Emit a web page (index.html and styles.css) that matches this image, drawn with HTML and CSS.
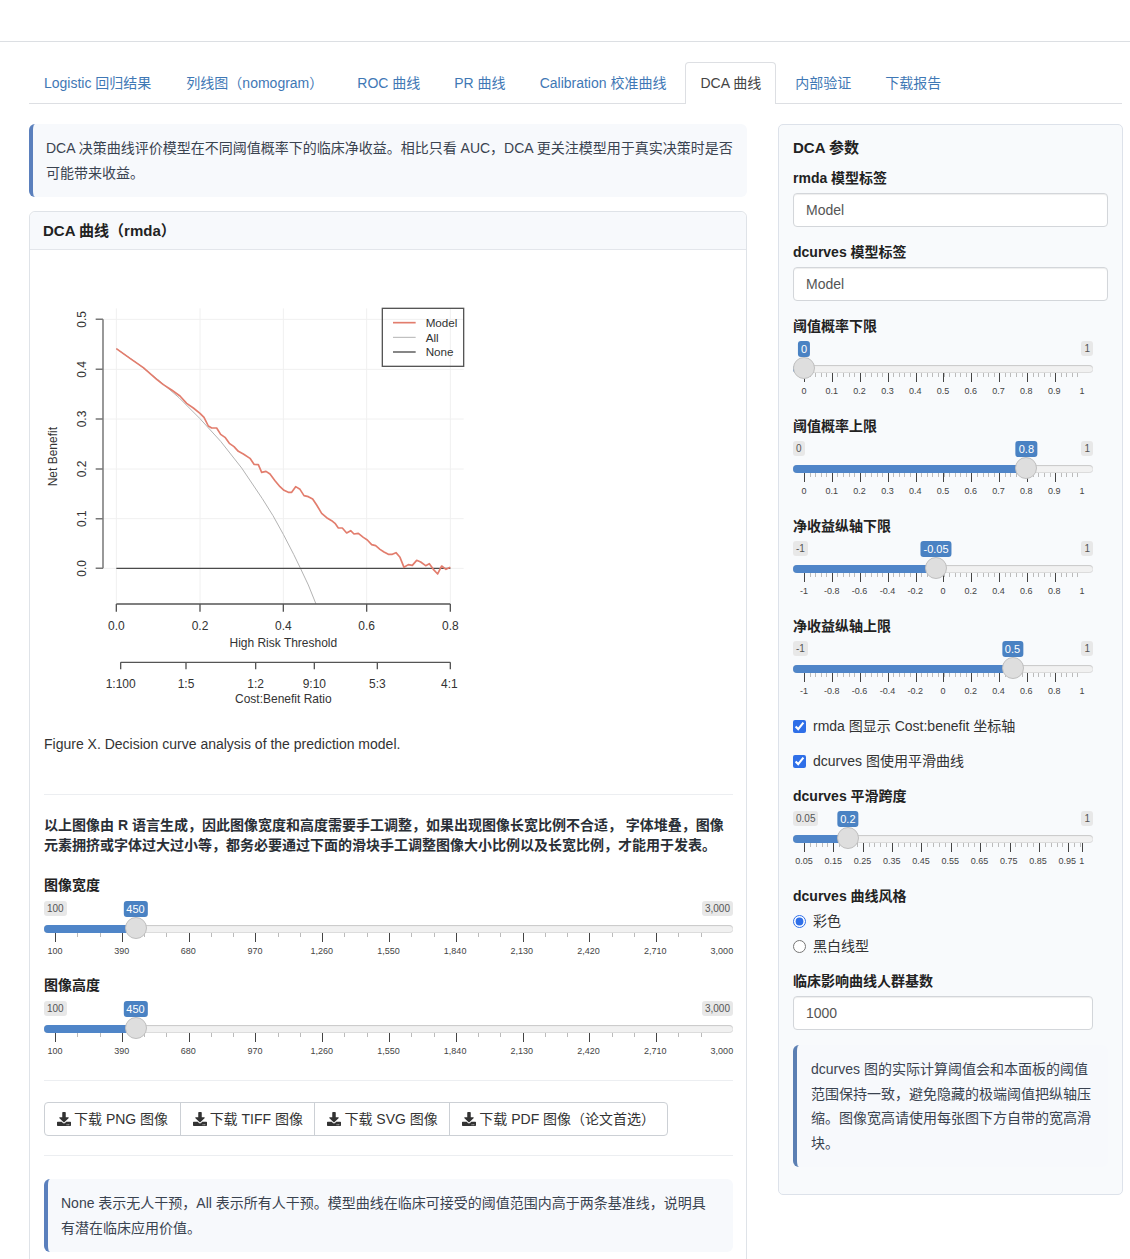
FILE: index.html
```html
<!DOCTYPE html>
<html lang="zh-CN">
<head>
<meta charset="utf-8">
<title>DCA 曲线</title>
<link rel="stylesheet" href="styles.css">
</head>
<body>
<svg class="defs" width="0" height="0" aria-hidden="true">
  <symbol id="dl" viewBox="0 0 512 512"><path d="M216 0h80c13.3 0 24 10.7 24 24v168h87.7c17.8 0 26.7 21.5 14.1 34.1L269.7 378.3c-7.5 7.5-19.8 7.5-27.3 0L90.1 226.1c-12.6-12.6-3.7-34.1 14.1-34.1H192V24c0-13.3 10.7-24 24-24zm296 376v112c0 13.3-10.7 24-24 24H24c-13.3 0-24-10.7-24-24V376c0-13.3 10.7-24 24-24h146.7l49 49c20.1 20.1 52.5 20.1 72.6 0l49-49H488c13.3 0 24 10.7 24 24zm-124 88c0-11-9-20-20-20s-20 9-20 20 9 20 20 20 20-9 20-20zm64 0c0-11-9-20-20-20s-20 9-20 20 9 20 20 20 20-9 20-20z"/></symbol>
</svg>
<header class="topbar"></header>
<main class="page">
  <nav class="tabs">
    <a class="tab">Logistic 回归结果</a>
    <a class="tab">列线图（nomogram）</a>
    <a class="tab">ROC 曲线</a>
    <a class="tab">PR 曲线</a>
    <a class="tab">Calibration 校准曲线</a>
    <a class="tab active">DCA 曲线</a>
    <a class="tab">内部验证</a>
    <a class="tab">下载报告</a>
  </nav>
  <div class="columns">
    <section class="left">
      <div class="note">DCA 决策曲线评价模型在不同阈值概率下的临床净收益。相比只看 AUC，DCA 更关注模型用于真实决策时是否可能带来收益。</div>
      <article class="card">
        <h3 class="card-head">DCA 曲线（rmda）</h3>
        <div class="card-body">
          <svg class="plot" width="450" height="450" viewBox="0 0 450 450">
            <g transform="translate(-14 16) scale(0.33333)">
              <g class="grid">
                <path d="M259 55V942M510 55V942M760 55V942M1010 55V942M1261 55V942"/>
                <path d="M219 88H1301M219 238H1301M219 387H1301M219 537H1301M219 686H1301M219 835H1301"/>
              </g>
              <path class="line-all" d="M259 176L322 220L384 269L447 323L509 385L572 454L635 534L697 626L729 677L760 733L791 793L810 832L835 885L858 942"/>
              <path class="line-none" d="M259 835H1261"/>
              <path class="line-model" d="M259 176L300 205L340 233L380 268L400 284L425 300L450 318L470 340L490 354L510 370L522 382L535 408L545 414L560 414L572 433L585 442L598 460L612 470L625 484L640 492L660 505L672 523L685 524L695 547L708 544L720 552L735 572L750 590L762 601L775 607L785 607L797 590L810 598L822 617L835 620L848 627L860 645L875 670L890 683L905 692L915 700L925 714L937 714L950 729L962 722L972 732L985 730L1000 742L1012 750L1025 764L1037 767L1050 778L1062 786L1075 793L1087 793L1098 788L1110 802L1122 832L1135 824L1147 826L1160 811L1172 816L1187 827L1198 821L1210 838L1223 852L1235 828L1248 838L1261 832"/>
              <path class="axis-y" d="M219 88V835M197 88H219M197 238H219M197 387H219M197 537H219M197 686H219M197 835H219"/>
              <path class="axis" d="M259 942H1261M259 942V965M510 942V965M760 942V965M1010 942V965M1261 942V965"/>
              <path class="axis" d="M272 1117H1261M272 1117V1138M468 1117V1138M677 1117V1138M853 1117V1138M1042 1117V1138M1261 1117V1138"/>
              <g class="plot-text">
                <text transform="rotate(-90 168 88)" x="168" y="88">0.5</text>
                <text transform="rotate(-90 168 238)" x="168" y="238">0.4</text>
                <text transform="rotate(-90 168 387)" x="168" y="387">0.3</text>
                <text transform="rotate(-90 168 537)" x="168" y="537">0.2</text>
                <text transform="rotate(-90 168 686)" x="168" y="686">0.1</text>
                <text transform="rotate(-90 168 835)" x="168" y="835">0.0</text>
                <text transform="rotate(-90 80 500)" x="80" y="500">Net Benefit</text>
                <text x="259" y="1020">0.0</text>
                <text x="510" y="1020">0.2</text>
                <text x="760" y="1020">0.4</text>
                <text x="1010" y="1020">0.6</text>
                <text x="1261" y="1020">0.8</text>
                <text x="760" y="1072">High Risk Threshold</text>
                <text x="272" y="1194">1:100</text>
                <text x="468" y="1194">1:5</text>
                <text x="677" y="1194">1:2</text>
                <text x="853" y="1194">9:10</text>
                <text x="1042" y="1194">5:3</text>
                <text x="1258" y="1194">4:1</text>
                <text x="760" y="1240">Cost:Benefit Ratio</text>
              </g>
              <rect class="legend-box" x="1057" y="55" width="244" height="174"/>
              <path class="line-model" d="M1089 98H1157"/>
              <path class="line-all" d="M1089 142H1157"/>
              <path class="line-none" d="M1089 186H1157"/>
              <g class="plot-text legend-text">
                <text x="1187" y="110">Model</text>
                <text x="1187" y="156">All</text>
                <text x="1187" y="199">None</text>
              </g>
            </g>
          </svg>
          <p class="caption">Figure X. Decision curve analysis of the prediction model.</p>
          <hr class="rule rule-a">
          <p class="warn">以上图像由 R 语言生成，因此图像宽度和高度需要手工调整，如果出现图像长宽比例不合适， 字体堆叠，图像元素拥挤或字体过大过小等，都务必要通过下面的滑块手工调整图像大小比例以及长宽比例，才能用于发表。</p>

          <div class="field">
            <label class="field-label">图像宽度</label>
            <div class="slider wide" style="--p:0.1207">
              <div class="ends"><span class="end">100</span><span class="end">3,000</span></div>
              <div class="track"><div class="fill"></div></div>
              <span class="from">450</span><span class="thumb"></span>
              <div class="scale"><div class="ticks"></div>
                <div class="labels"><span>100</span><span>390</span><span>680</span><span>970</span><span>1,260</span><span>1,550</span><span>1,840</span><span>2,130</span><span>2,420</span><span>2,710</span><span>3,000</span></div>
              </div>
            </div>
          </div>
          <div class="field">
            <label class="field-label">图像高度</label>
            <div class="slider wide" style="--p:0.1207">
              <div class="ends"><span class="end">100</span><span class="end">3,000</span></div>
              <div class="track"><div class="fill"></div></div>
              <span class="from">450</span><span class="thumb"></span>
              <div class="scale"><div class="ticks"></div>
                <div class="labels"><span>100</span><span>390</span><span>680</span><span>970</span><span>1,260</span><span>1,550</span><span>1,840</span><span>2,130</span><span>2,420</span><span>2,710</span><span>3,000</span></div>
              </div>
            </div>
          </div>

          <hr class="rule rule-b">
          <div class="btn-group">
            <a class="btn"><svg class="dl-icon"><use href="#dl"/></svg>下载 PNG 图像</a>
            <a class="btn"><svg class="dl-icon"><use href="#dl"/></svg>下载 TIFF 图像</a>
            <a class="btn"><svg class="dl-icon"><use href="#dl"/></svg>下载 SVG 图像</a>
            <a class="btn"><svg class="dl-icon"><use href="#dl"/></svg>下载 PDF 图像（论文首选）</a>
          </div>
          <hr class="rule rule-c">
          <div class="note">None 表示无人干预，All 表示所有人干预。模型曲线在临床可接受的阈值范围内高于两条基准线，说明具有潜在临床应用价值。</div>
        </div>
      </article>
    </section>

    <aside class="side">
      <h4 class="side-title">DCA 参数</h4>
      <div class="field">
        <label class="field-label">rmda 模型标签</label>
        <input class="input" type="text" value="Model">
      </div>
      <div class="field">
        <label class="field-label">dcurves 模型标签</label>
        <input class="input" type="text" value="Model">
      </div>

      <div class="field">
        <label class="field-label">阈值概率下限</label>
        <div class="slider" style="--p:0">
          <div class="ends"><span class="end hidden">0</span><span class="end">1</span></div>
          <div class="track"><div class="fill"></div></div>
          <span class="from">0</span><span class="thumb"></span>
          <div class="scale"><div class="ticks"></div>
            <div class="labels"><span>0</span><span>0.1</span><span>0.2</span><span>0.3</span><span>0.4</span><span>0.5</span><span>0.6</span><span>0.7</span><span>0.8</span><span>0.9</span><span>1</span></div>
          </div>
        </div>
      </div>
      <div class="field">
        <label class="field-label">阈值概率上限</label>
        <div class="slider" style="--p:0.8">
          <div class="ends"><span class="end">0</span><span class="end">1</span></div>
          <div class="track"><div class="fill"></div></div>
          <span class="from">0.8</span><span class="thumb"></span>
          <div class="scale"><div class="ticks"></div>
            <div class="labels"><span>0</span><span>0.1</span><span>0.2</span><span>0.3</span><span>0.4</span><span>0.5</span><span>0.6</span><span>0.7</span><span>0.8</span><span>0.9</span><span>1</span></div>
          </div>
        </div>
      </div>
      <div class="field">
        <label class="field-label">净收益纵轴下限</label>
        <div class="slider" style="--p:0.475">
          <div class="ends"><span class="end">-1</span><span class="end">1</span></div>
          <div class="track"><div class="fill"></div></div>
          <span class="from">-0.05</span><span class="thumb"></span>
          <div class="scale"><div class="ticks"></div>
            <div class="labels"><span>-1</span><span>-0.8</span><span>-0.6</span><span>-0.4</span><span>-0.2</span><span>0</span><span>0.2</span><span>0.4</span><span>0.6</span><span>0.8</span><span>1</span></div>
          </div>
        </div>
      </div>
      <div class="field">
        <label class="field-label">净收益纵轴上限</label>
        <div class="slider" style="--p:0.75">
          <div class="ends"><span class="end">-1</span><span class="end">1</span></div>
          <div class="track"><div class="fill"></div></div>
          <span class="from">0.5</span><span class="thumb"></span>
          <div class="scale"><div class="ticks"></div>
            <div class="labels"><span>-1</span><span>-0.8</span><span>-0.6</span><span>-0.4</span><span>-0.2</span><span>0</span><span>0.2</span><span>0.4</span><span>0.6</span><span>0.8</span><span>1</span></div>
          </div>
        </div>
      </div>

      <label class="check"><input type="checkbox" checked>rmda 图显示 Cost:benefit 坐标轴</label>
      <label class="check"><input type="checkbox" checked>dcurves 图使用平滑曲线</label>

      <div class="field">
        <label class="field-label">dcurves 平滑跨度</label>
        <div class="slider span" style="--p:0.1579">
          <div class="ends"><span class="end">0.05</span><span class="end">1</span></div>
          <div class="track"><div class="fill"></div></div>
          <span class="from">0.2</span><span class="thumb"></span>
          <div class="scale"><div class="ticks"></div>
            <div class="labels"><span>0.05</span><span>0.15</span><span>0.25</span><span>0.35</span><span>0.45</span><span>0.55</span><span>0.65</span><span>0.75</span><span>0.85</span><span>0.95</span><span>1</span></div>
          </div>
        </div>
      </div>

      <div class="field">
        <label class="field-label">dcurves 曲线风格</label>
        <div class="radios">
          <label class="radio"><input type="radio" name="style" checked>彩色</label>
          <label class="radio"><input type="radio" name="style">黑白线型</label>
        </div>
      </div>
      <div class="field">
        <label class="field-label">临床影响曲线人群基数</label>
        <input class="input short" type="text" value="1000">
      </div>
      <div class="note side-note">dcurves 图的实际计算阈值会和本面板的阈值范围保持一致，避免隐藏的极端阈值把纵轴压缩。图像宽高请使用每张图下方自带的宽高滑块。</div>
    </aside>
  </div>
</main>
</body>
</html>
```
FILE: styles.css
```css
* { box-sizing: border-box; }
html, body { height: 1259px; overflow: hidden; }
body {
  margin: 0;
  background: #fff;
  color: #333;
  font: 14px/20px "Liberation Sans", "Noto Sans CJK SC", sans-serif;
}
.defs { position: absolute; }
.topbar { height: 42px; border-bottom: 1px solid #dcdfe3; }
.page { padding: 20px 8px 0 29px; }

.tabs { display: flex; gap: 4px; height: 42px; border-bottom: 1px solid #dddfe3; }
.tab {
  height: 42px;
  padding: 10px 14px 0;
  color: #3f78b5;
  border: 1px solid transparent;
  border-bottom: 0;
  border-radius: 4px 4px 0 0;
  white-space: nowrap;
}
.tab:first-child { margin-right: 1px; }
.tab.active { color: #444; background: #fff; border-color: #dddfe3; }

.columns {
  display: grid;
  grid-template-columns: 718px 345px;
  column-gap: 31px;
  align-items: start;
  margin-top: 20px;
}

.note {
  padding: 12px 14px 12px 13px;
  line-height: 24.5px;
  color: #3a4350;
  background: #f7f9fc;
  border-left: 4px solid #5b80bd;
  border-radius: 6px;
}

.card {
  margin-top: 14px;
  height: 1100px;
  border: 1px solid #dfe3e8;
  border-radius: 6px;
}
.card-head {
  margin: 0;
  height: 38px;
  padding: 9px 13px;
  font-size: 15px;
  font-weight: 700;
  color: #222;
  background: #f7f9fc;
  border-bottom: 1px solid #e3e6eb;
  border-radius: 6px 6px 0 0;
}
.card-body { padding: 24px 13px 0 14px; }

.plot { display: block; }
.grid path { fill: none; stroke: #f0f0f0; stroke-width: 3; }
.line-model { fill: none; stroke: #e27d6d; stroke-width: 5; stroke-linejoin: round; }
.line-all { fill: none; stroke: #b3b3b3; stroke-width: 3; }
.line-none { fill: none; stroke: #4a4a4a; stroke-width: 4; }
.axis { fill: none; stroke: #555; stroke-width: 4; }
.axis-y { fill: none; stroke: #777; stroke-width: 4.5; }
.legend-box { fill: none; stroke: #555; stroke-width: 4; }
.plot-text text {
  font: 36px "Liberation Sans", sans-serif;
  fill: #333;
  text-anchor: middle;
}
.legend-text text { text-anchor: start; font-size: 35px; }

.caption { margin: 10px 0 0; }
.rule { border: 0; border-top: 1px solid #eceef1; margin: 0; }
.rule-a { margin-top: 40px; }
.warn { margin: 20px 0; font-weight: 700; color: #2a2f36; }
.rule-b { margin-top: 20px; }
.rule-c { margin-top: 19px; margin-bottom: 23px; }

.btn-group {
  display: inline-flex;
  margin-top: 21px;
  border: 1px solid #ccd0d5;
  border-radius: 4px;
  vertical-align: top;
}
.btn {
  display: flex;
  align-items: center;
  height: 32px;
  padding: 0 11.5px 0 12px;
  color: #333;
  white-space: nowrap;
}
.btn + .btn { border-left: 1px solid #ccd0d5; }
.dl-icon { width: 14px; height: 14px; margin-right: 3px; fill: #333; }

.side {
  height: 1071px;
  padding: 13px 14px 0;
  background: #f8fafc;
  border: 1px solid #dde2ea;
  border-radius: 5px;
}
.side-title { margin: 0 0 10px; font-size: 15px; line-height: 20px; font-weight: 700; color: #222; }

.field { margin-bottom: 15px; }
.field-label { display: block; margin-bottom: 5px; font-weight: 700; color: #222; }
.input {
  display: block;
  width: 100%;
  height: 34px;
  padding: 6px 12px;
  font: inherit;
  color: #555;
  background: #fff;
  border: 1px solid #d3d6da;
  border-radius: 4px;
  box-shadow: inset 0 1px 1px rgba(0, 0, 0, .07);
}
.input.short { width: 300px; }

.check { display: flex; align-items: center; gap: 7px; margin-bottom: 15px; color: #333; }
.check input, .radio input { width: 13px; height: 13px; margin: 0; accent-color: #2f6fe8; }
.radios { display: flex; flex-direction: column; gap: 5px; }
.radio { display: flex; align-items: center; gap: 7px; }

/* range slider */
.slider {
  --major: 10%;
  --minor: 2%;
  position: relative;
  width: 300px;
  height: 60px;
}
.slider.wide { width: 100%; height: 59px; margin-top: 6px; --minor: 3.3333%; }
.field-label + .slider.wide { margin-top: 6px; }
.ends { display: flex; justify-content: space-between; height: 15px; }
.end {
  padding: 0 3px;
  font-size: 10px;
  line-height: 15px;
  color: #555;
  background: #e8e8e8;
  border-radius: 3px;
}
.end.hidden { visibility: hidden; }
.track {
  height: 8px;
  margin-top: 9px;
  background: #f1f1f1;
  border-radius: 4px;
  box-shadow: inset 0 1px 1px #c8c8c8, inset 0 -1px 0 #dcdcdc;
  overflow: hidden;
}
.fill {
  width: calc(11px + (100% - 22px) * var(--p));
  height: 100%;
  background: #4f85c8;
}
.thumb {
  position: absolute;
  top: 16px;
  left: calc(11px + (100% - 22px) * var(--p));
  width: 22px;
  height: 22px;
  margin-left: -11px;
  background: #dedede;
  border: 1px solid #bfbfbf;
  border-radius: 50%;
}
.from {
  position: absolute;
  top: 0;
  left: calc(11px + (100% - 22px) * var(--p));
  transform: translateX(-50%);
  padding: 0 3px;
  font-size: 11px;
  line-height: 16px;
  color: #fff;
  background: #4a82c3;
  border-radius: 3px;
}
.scale { margin: 0 11px; }
.ticks {
  width: calc(100% + 1px);
  height: 9px;
  background-image:
    repeating-linear-gradient(to right, #444 0 1px, transparent 1px var(--major)),
    repeating-linear-gradient(to right, #bbb 0 1px, transparent 1px var(--minor));
  background-size: 100% 9px, 100% 4px;
  background-repeat: no-repeat;
}
.labels {
  display: grid;
  grid-template-columns: repeat(10, 10%) 0;
  margin-top: 4px;
  font-size: 9px;
  line-height: 10px;
  color: #444;
}
.labels span { justify-self: start; transform: translateX(-50%); white-space: nowrap; }

.slider.span { --major: 10.526%; --minor: 2.105%; }
.slider.span .labels { grid-template-columns: repeat(9, 10.526%) 5.263% 0; }
.slider.span .ticks {
  background-image:
    linear-gradient(#444, #444),
    repeating-linear-gradient(to right, #444 0 1px, transparent 1px var(--major)),
    repeating-linear-gradient(to right, #bbb 0 1px, transparent 1px var(--minor));
  background-size: 1px 9px, 100% 9px, 100% 4px;
  background-position: right top, left top, left top;
}

.side-note { padding: 12px 14px; background: #f7f9fc; border-left-color: #5b7fb3; }
```
